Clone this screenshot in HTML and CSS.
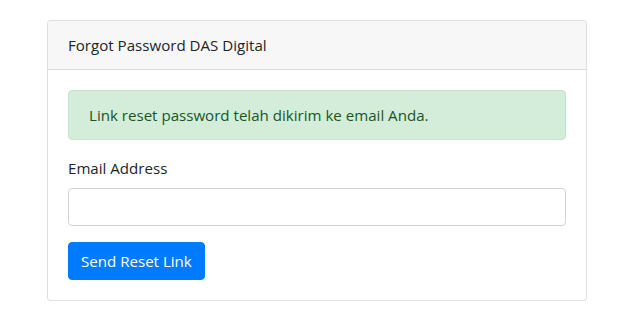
FILE: index.html
```
<!DOCTYPE html>
<html lang="en">
<head>
    <meta charset="UTF-8">
    <meta name="viewport" content="width=device-width, initial-scale=1.0">
    <title>Forgot Password - DAS Digital</title>
    <link rel="stylesheet" href="styles.css">
</head>
<body>
    <div class="wrapper">
        <div class="card">
            <div class="card-header">Forgot Password DAS Digital</div>
            <div class="card-body">
                <div class="alert-success">Link reset password telah dikirim ke email Anda.</div>
                <form>
                    <div class="form-group">
                        <label for="email">Email Address</label>
                        <input type="email" id="email" class="form-control">
                    </div>
                    <button type="submit" class="btn-primary">Send Reset Link</button>
                </form>
            </div>
        </div>
    </div>
</body>
</html>
```

FILE: styles.css
```
body {
    margin: 0;
    font-family: "Open Sans", "Noto Sans", sans-serif;
    font-size: 15.1px;
    line-height: 24px;
    color: #212529;
    background: #fff;
}
.wrapper {
    padding: 20px 35px 0 47px;
}
.card {
    border: 1px solid rgba(0,0,0,0.125);
    border-radius: 4px;
    background: #fff;
}
.card-header {
    padding: 12px 20px;
    background: #f7f7f7;
    border-bottom: 1px solid rgba(0,0,0,0.125);
    border-radius: 3px 3px 0 0;
}
.card-body {
    padding: 20px;
}
.alert-success {
    padding: 12px 20px;
    margin-bottom: 16px;
    background: #d4edda;
    border: 1px solid #c3e6cb;
    color: #155724;
    border-radius: 4px;
}
.form-group {
    margin-bottom: 16px;
}
label {
    display: inline-block;
    margin-bottom: 8px;
}
.form-control {
    display: block;
    box-sizing: border-box;
    width: 100%;
    height: 38px;
    padding: 6px 12px;
    font: inherit;
    border: 1px solid #ced4da;
    border-radius: 4px;
    margin: 0;
}
.btn-primary {
    font: inherit;
    color: #fff;
    background: #007bff;
    border: 1px solid #007bff;
    border-radius: 4px;
    padding: 6px 12px;
    cursor: pointer;
}
```
